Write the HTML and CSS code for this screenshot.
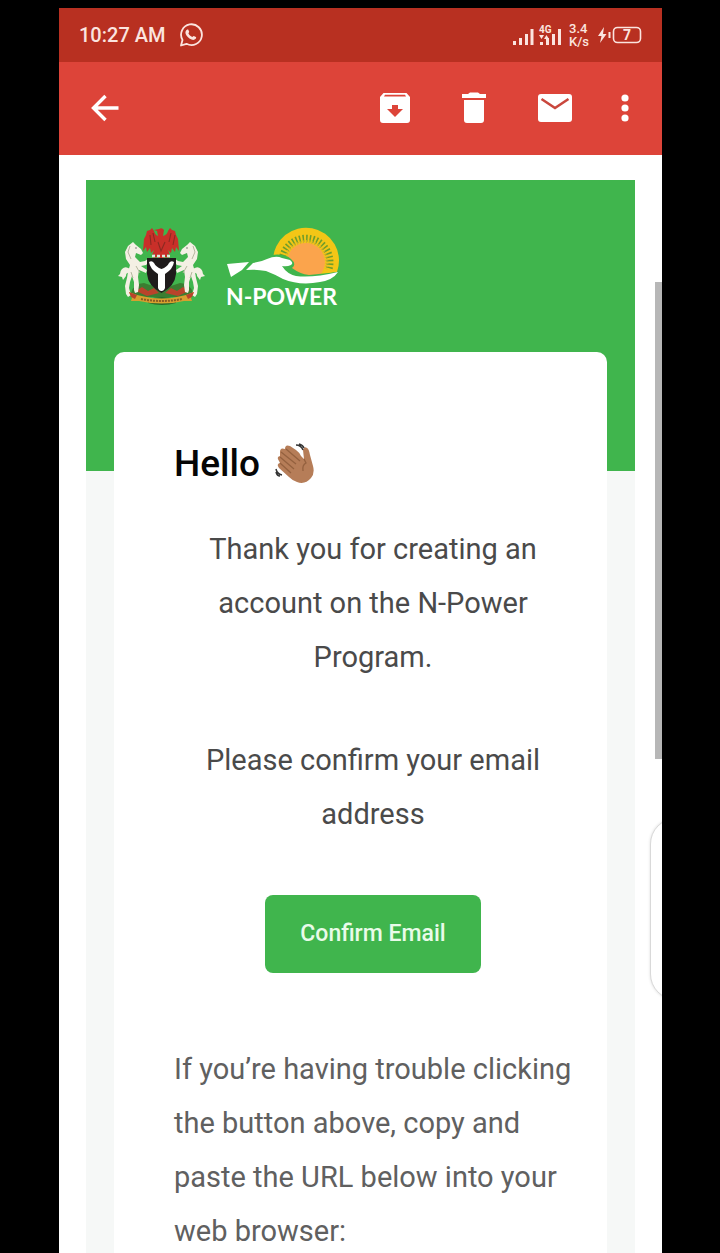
FILE: index.html
```html
<!DOCTYPE html>
<html lang="en">
<head>
<meta charset="utf-8">
<meta name="viewport" content="width=device-width, initial-scale=1">
<title>N-Power email confirmation</title>
<link rel="stylesheet" href="styles.css">
</head>
<body>
<div class="phone">
  <div class="status">
    <span class="time">10:27 AM</span>
    <svg class="whatsapp" viewBox="0 0 24 24" width="24" height="24" aria-label="WhatsApp"><path d="M2 22.5l1.500-5.600a10.400 10.400 0 1 1 4 3.900z" fill="none" stroke="#fbe4df" stroke-width="1.800" stroke-linejoin="round"/><path d="M8.200 6.600c.5-.3 1-.2 1.200.3l.8 1.900c.1.400-.6 1.100-.8 1.500.8 1.700 2.100 2.900 3.900 3.800.4-.2 1-1.300 1.500-1.100l2.100 1c.4.200.3 1.200-.2 1.800-1 1.100-2.500 1.400-4.200.7-3-1.200-5-3.300-5.900-5.700-.5-1.700.2-3.300 1.600-4.200z" fill="#fbe4df"/></svg>
    <svg class="signal" viewBox="0 0 48 24" width="48" height="24" aria-label="Signal 4G"><g fill="#fbe4df"><path d="M0 18h3v4H0zM6 15h3v7H6zM12 11h3v11h-3zM17.500 6h3v16h-3zM27 19h3v3h-3zM33 15h3v7h-3zM39 11h3v11h-3zM45 6h3v16h-3zM26 12h5l-2.500 4zM31 16l2.500-4 2.500 4z"/></g><text class="tiny" x="26" y="10">4G</text></svg>
    <span class="speed">3.4<br>K/s</span>
    <svg class="battery" viewBox="0 0 44 18" width="44" height="18" aria-label="Battery 7%"><path d="M6 1L0 10h3.500L2 17 8.500 8H5z" fill="#fbe4df"/><path d="M10.500 6h2v6h-2z" fill="#fbe4df"/><rect x="15.500" y="1.500" width="27" height="15" rx="4" fill="none" stroke="#fbe4df" stroke-width="1.600"/><text class="charge" x="29" y="14" text-anchor="middle">7</text></svg>
  </div>
  <header class="appbar">
    <button class="icon" aria-label="Back"><svg viewBox="0 0 30 30" width="30" height="30"><path d="M28.500 15H4M15.500 3L3.500 15l12 12" fill="none" stroke="#fff" stroke-width="3.400"/></svg></button>
    <div class="actions">
      <button class="icon" aria-label="Archive"><svg viewBox="0 0 30 32" width="30" height="32"><path fill="#fff" fill-rule="evenodd" d="M3.500 1h23L30 5v23a3 3 0 0 1-3 3H3a3 3 0 0 1-3-3V5zM5 2.800L4 4.600h22l-1-1.800zM12 13v4H7l8 8 8-8h-5v-4z"/></svg></button>
      <button class="icon" aria-label="Delete"><svg viewBox="0 0 26 32" width="26" height="32"><path fill="#fff" d="M7 2l2-1.500h8L19 2h6v4H1V2zM3 8h20v20a3 3 0 0 1-3 3H6a3 3 0 0 1-3-3z"/></svg></button>
      <button class="icon" aria-label="Mark unread"><svg viewBox="0 0 34 28" width="34" height="28"><rect width="34" height="28" rx="3" fill="#fff"/><path d="M3.500 5L17 14 30.500 5" fill="none" stroke="#c9473d" stroke-width="2.600"/></svg></button>
      <button class="icon" aria-label="More options"><svg viewBox="0 0 8 28" width="8" height="28"><g fill="#fff"><circle cx="4" cy="4" r="3.600"/><circle cx="4" cy="14" r="3.600"/><circle cx="4" cy="24" r="3.600"/></g></svg></button>
    </div>
  </header>
  <main class="viewport">
    <article class="email">
      <div class="logos">
        <svg class="arms" viewBox="0 0 88 80" width="88" height="80" aria-label="Coat of arms of Nigeria">
          <path d="M13 66q3-10 13-10l18 6 18-6q10 0 13 10l-10 4H23z" fill="#3b7d31"/>
          <path d="M30 72q14-4 28 0v4q-14 4-28 0z" fill="#256b2b"/>
          <path d="M18 64l6-4 6 4 6-3 5 5-12 3zM47 66l6-5 6 3 6-4 6 4-11 5z" fill="#b9432b"/>
          <path d="M41 2q3-2 5 1l-1 6q4-1 5-5l2-3 2 2 3 1 1 4 2 4 1 12-3-4-1 5-3-4-1 5-3-3 2 5-3-1 2 4-4-1-4 2-4-2-4 1 2-4-3 1 2-5-3 3-1-5-3 4-1-5-3 4 1-12 2-4 1-4 3-1 2-2 2 3q1 4 4 5l-1-5-3-1z" fill="#c92f29"/>
          <path d="M35 6l2 9M32 8l1 10M53 6l-2 9M57 8l-2 10M40 15l3 9 4-9" stroke="#8a2a22" stroke-width="1.100" fill="none"/>
          <g id="horse">
            <path d="M13 43q-5-5-9-1-2 2-2 5l-2 2 4 1 1 3 3-4q0-4 4-3z" fill="#f4f0e4"/>
            <path d="M15 15l3 3 5 4 2 4-2 2-5-2-1 4 5 5 5-1 4-3 2 2-5 5-5 1 6 4-1 3-7-3-1 7 1 8-1 7-3 1-1-3 0-8-2-6-2 6-1 6 2 7-3 2-2-3-1-8 2-8 1-6 2-7-4-6-1-7 3-6z" fill="#f4f0e4"/>
            <path d="M12 19l-2 6 3 7M18 39l4 7M13 45l2 6" stroke="#b5b79f" stroke-width="1" fill="none"/>
            <circle cx="18" cy="21" r=".7" fill="#555"/>
          </g>
          <use href="#horse" transform="matrix(-1 0 0 1 87 0)"/>
          <path d="M29 31h29v16q-1 12-14.500 19Q30 59 29 47z" fill="#1f1b1b"/>
          <path d="M31 35q3-2 5 1 2 4 7.500 6Q49 40 51 36q2-3 5-1-1 7-9 12v14q-1 3-3.500 3T40 61V47q-8-5-9-12z" fill="#fff"/>
          <path d="M34 29h20" stroke="#d8eee0" stroke-width="2.500" stroke-dasharray="3 2"/>
          <path d="M11 65l8 3q25 7 49 0l8-3-3 6 1 3-8 0q-22 5-45 0l-8 0 1-3z" fill="#d8a02f"/>
          <path d="M23 72q21 4 41 0" stroke="#8a5b23" stroke-width="2" stroke-dasharray="2 1" fill="none"/>
          <path d="M11 65l8 3-2 4-4-2zM76 65l-8 3 2 4 4-2z" fill="#b9432b"/>
        </svg>
        <div class="npower">
          <svg viewBox="0 0 114 58" width="114" height="58" aria-hidden="true">
            <path d="M47 33a33 33 0 1 1 64 12L80 50z" fill="#f3c616"/>
            <path d="M56 36a24 24 0 1 1 47 6" fill="none" stroke="#6f9c2b" stroke-width="7" stroke-dasharray="1.500 2"/>
            <path d="M59 36a21 21 0 1 1 41 6" fill="none" stroke="#d6ab30" stroke-width="3" stroke-dasharray="1 2"/>
            <circle cx="80" cy="35" r="19" fill="#fba44c"/>
            <path d="M22 41q6-9 23-13 14-2 20 4 6 5 1 9 8 6 17 7l29-3v13H22z" fill="#40b54d"/>
            <path d="M1 37l22-2-7 8-11 7z" fill="#fff"/>
            <path d="M20 43l7-7q8-1 14-4 9-4 15-1l8 2q4 3 1 5-4 2-9 1 5 8 14 10 17 2 42-4-5 8-18 10-20 4-37-3-9-5-17-8-10-2-20-1z" fill="#fff"/>
          </svg>
          <span class="brand">N-POWER</span>
        </div>
      </div>
      <section class="card">
        <h1 class="hello">Hello
          <svg viewBox="0 0 40 40" width="40" height="40" role="img" aria-label="waving hand"><path d="M5 9q0-5 5-3 0-5 5-3l6 4q3 2 5 6l3 3-1-9q1-4 4-2 2 1 3 7l3 11q2 7-2 12-6 7-14 4-4-1-8-5L4 25q-3-4 1-5l-1-2q-3-4 1-5z" fill="#b67d58"/><path d="M6 9l15 12M11 6l14 12M5 14l14 12M5 20l11 10M29 16l2 4q-4 2-3 8" fill="none" stroke="#94613f" stroke-width="1.300"/><path d="M21 2q5 0 7 5M24 1q4 1 5 4M1 26q1 5 6 6M1 29q1 4 4 4" fill="none" stroke="#353535" stroke-width="1.500"/></svg>
        </h1>
        <p class="lead">Thank you for creating an account on the N-Power Program.</p>
        <p class="lead">Please confirm your email address</p>
        <button class="confirm">Confirm Email</button>
        <p class="help">If you’re having trouble clicking the button above, copy and paste the URL below into your web browser:</p>
      </section>
    </article>
  </main>
  <div class="scrollbar"></div>
  <div class="edge"></div>
</div>
</body>
</html>
```
FILE: styles.css
```css
* { box-sizing: border-box; }

body {
  margin: 0;
  height: 100vh;
  padding: 8px 58px 0 59px;
  overflow: hidden;
  background: #000;
  font-family: Roboto, "Liberation Sans", sans-serif;
}

.phone {
  position: relative;
  display: flex;
  flex-direction: column;
  height: 100%;
  overflow: hidden;
  background: #fff;
}

.status {
  display: flex;
  flex: none;
  align-items: center;
  height: 54px;
  padding: 0 20px;
  background: #b83021;
  color: #fbe4df;
}

.time { font-size: 20px; font-weight: 500; }
.whatsapp { margin-left: 14px; }
.signal { margin-left: auto; }
.tiny { font: 700 10px Roboto, sans-serif; fill: #fbe4df; }
.speed { margin: 0 9px 0 8px; font-size: 13px; font-weight: 500; line-height: 13px; }
.charge { font: 700 14px Roboto, sans-serif; fill: #fbe4df; }

.appbar {
  display: flex;
  flex: none;
  align-items: center;
  justify-content: space-between;
  height: 93px;
  padding: 0 33px 2px 31px;
  background: #dd4439;
}

.actions { display: flex; align-items: center; gap: 51px; }
.actions .icon:last-child { margin-left: -2px; }

.icon {
  display: flex;
  padding: 0;
  border: 0;
  background: none;
}

.viewport { flex: 1; min-height: 0; padding: 25px 27px 0; overflow: hidden; }

.email {
  min-height: 100%;
  padding: 47px 28px 0;
  background: linear-gradient(#40b54d 291px, #f6f8f7 291px);
}

.logos { display: flex; gap: 20px; height: 125px; padding-left: 4px; }
.npower { display: flex; flex-direction: column; }
.brand { color: #fff; font: 700 23px/22px Lato, sans-serif; }

.card {
  padding: 89px 35px 60px 60px;
  border-radius: 10px;
  background: #fff;
}

.hello {
  display: flex;
  align-items: center;
  gap: 15px;
  height: 44px;
  margin: 0 0 37px;
  color: #050505;
  font-size: 37px;
  font-weight: 500;
}

.lead, .help { margin: 0 0 49px; font-size: 29px; line-height: 54px; }
.lead { color: #4a4a4a; text-align: center; }
.help { color: #606060; }

.confirm {
  display: block;
  margin: 54px auto 69px;
  padding: 26px 35px;
  border: 0;
  border-radius: 8px;
  background: #40b54d;
  color: #e9fbe9;
  font: 500 23px/26px Roboto, sans-serif;
}

.scrollbar {
  position: absolute;
  top: 274px;
  right: 0;
  width: 7px;
  height: 477px;
  background: #b7b7b7;
}

.edge {
  position: absolute;
  top: 810px;
  right: -40px;
  width: 52px;
  height: 182px;
  border: 1px solid #d9d9d9;
  border-radius: 26px;
  background: #fff;
  box-shadow: 0 0 3px #ddd;
}
```
